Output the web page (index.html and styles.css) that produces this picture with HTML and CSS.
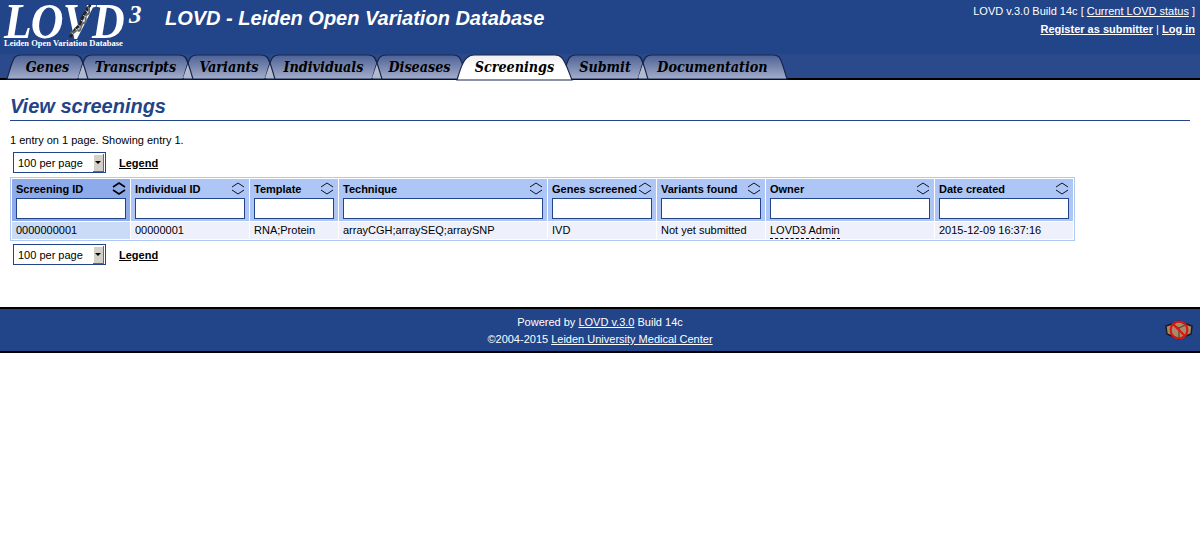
FILE: index.html
```html
<!DOCTYPE html>
<html lang="en">
<head>
<meta charset="utf-8">
<title>LOVD - Leiden Open Variation Database</title>
<link rel="stylesheet" href="styles.css">
</head>
<body>
<header class="top">
  <div class="logo">
    <div class="logo-row"><span class="logo-word">LOVD</span><span class="logo-three">3</span></div>
    <div class="logo-sub">Leiden Open Variation Database</div>
    <svg class="logo-dna" width="24" height="34" viewBox="0 0 30 36" preserveAspectRatio="none">
      <path d="M2 35C8 31 6 28 11 25S16 20 17 16 22 10 23 7 27 3 28 1" fill="none" stroke="#222" stroke-width="3"/>
      <path d="M3 30C8 33 9 26 13 28S15 20 20 20 19 12 24 11 25 5 26 3" fill="none" stroke="#666" stroke-width="2.4"/>
      <path d="M5 31l3 2M9 26l3 2M13 22l3 3M16 17l4 2M19 12l4 2M22 7l3 2" stroke="#ddd" stroke-width="1"/>
    </svg>
  </div>
  <div class="site-title">LOVD - Leiden Open Variation Database</div>
  <div class="top-right">
    <div>LOVD v.3.0 Build 14c [ <a href="#">Current LOVD status</a> ]</div>
    <div class="top-links"><a href="#"><b>Register as submitter</b></a> | <a href="#"><b>Log in</b></a></div>
  </div>
</header>
<nav class="tabs">
  <a class="tab" href="#"><svg width="81" height="24" viewBox="0 0 81 24"><defs><linearGradient id="tabfill" x1="0" y1="0" x2="0" y2="1"><stop offset="0" stop-color="#4b6094"/><stop offset="1" stop-color="#a5aecb"/></linearGradient><linearGradient id="tabactive" x1="0" y1="0" x2="0" y2="1"><stop offset="0" stop-color="#eeeeee"/><stop offset=".5" stop-color="#fff"/><stop offset="1" stop-color="#fff"/></linearGradient></defs><path class="tab-shape" d="M0 25C3 16 5 6 8 3Q10 1 14 1H67Q71 1 73 3C76 6 78 16 81 25Z"/></svg><span>Genes</span></a>
  <a class="tab" href="#"><svg width="115" height="24" viewBox="0 0 115 24"><path class="tab-shape" d="M0 25C3 16 5 6 8 3Q10 1 14 1H101Q105 1 107 3C110 6 112 16 115 25Z"/><path class="tab-joint" d="M5 10L10 24H0Z"/><path class="tab-edge" d="M2 3C5 6 7 16 10 25"/></svg><span>Transcripts</span></a>
  <a class="tab" href="#"><svg width="92" height="24" viewBox="0 0 92 24"><path class="tab-shape" d="M0 25C3 16 5 6 8 3Q10 1 14 1H78Q82 1 84 3C87 6 89 16 92 25Z"/><path class="tab-joint" d="M5 10L10 24H0Z"/><path class="tab-edge" d="M2 3C5 6 7 16 10 25"/></svg><span>Variants</span></a>
  <a class="tab" href="#"><svg width="117" height="24" viewBox="0 0 117 24"><path class="tab-shape" d="M0 25C3 16 5 6 8 3Q10 1 14 1H103Q107 1 109 3C112 6 114 16 117 25Z"/><path class="tab-joint" d="M5 10L10 24H0Z"/><path class="tab-edge" d="M2 3C5 6 7 16 10 25"/></svg><span>Individuals</span></a>
  <a class="tab" href="#"><svg width="95" height="24" viewBox="0 0 95 24"><path class="tab-shape" d="M0 25C3 16 5 6 8 3Q10 1 14 1H81Q85 1 87 3C90 6 92 16 95 25Z"/><path class="tab-joint" d="M5 10L10 24H0Z"/><path class="tab-edge" d="M2 3C5 6 7 16 10 25"/></svg><span>Diseases</span></a>
  <a class="tab tab-current" href="#"><svg width="115" height="26" viewBox="0 0 115 26"><path class="tab-shape" d="M0 26C3 16 6 6 11 3Q13 1 17 1H98Q102 1 104 3C108 6 111 16 115 26Z"/></svg><span>Screenings</span></a>
  <a class="tab" href="#"><svg width="86" height="24" viewBox="0 0 86 24"><path class="tab-shape" d="M0 25C3 16 5 6 8 3Q10 1 14 1H72Q76 1 78 3C81 6 83 16 86 25Z"/></svg><span>Submit</span></a>
  <a class="tab" href="#"><svg width="149" height="24" viewBox="0 0 149 24"><path class="tab-shape" d="M0 25C3 16 5 6 8 3Q10 1 14 1H135Q139 1 141 3C144 6 146 16 149 25Z"/><path class="tab-joint" d="M5 10L10 24H0Z"/><path class="tab-edge" d="M2 3C5 6 7 16 10 25"/></svg><span>Documentation</span></a>
</nav>
<main class="content">
  <h1 class="page-title">View screenings</h1>
  <p class="entries">1 entry on 1 page. Showing entry 1.</p>
  <div class="pager">
    <div class="select-box"><span>100 per page</span><span class="select-arrow"></span></div>
    <a class="legend" href="#">Legend</a>
  </div>
  <table class="data">
    <thead>
      <tr>
        <th class="sorted"><div class="th-row">Screening ID<svg class="sort" width="14" height="13" viewBox="0 0 14 13"><path class="sort-on" d="M1 5L7 1L13 5M1 8L7 12L13 8"/></svg></div><input class="f-110" type="text"></th>
        <th><div class="th-row">Individual ID<svg class="sort" width="14" height="13" viewBox="0 0 14 13"><path d="M1 5L7 1L13 5M1 8L7 12L13 8"/></svg></div><input class="f-110" type="text"></th>
        <th><div class="th-row">Template<svg class="sort" width="14" height="13" viewBox="0 0 14 13"><path d="M1 5L7 1L13 5M1 8L7 12L13 8"/></svg></div><input class="f-80" type="text"></th>
        <th><div class="th-row">Technique<svg class="sort" width="14" height="13" viewBox="0 0 14 13"><path d="M1 5L7 1L13 5M1 8L7 12L13 8"/></svg></div><input class="f-200" type="text"></th>
        <th><div class="th-row">Genes screened<svg class="sort" width="14" height="13" viewBox="0 0 14 13"><path d="M1 5L7 1L13 5M1 8L7 12L13 8"/></svg></div><input class="f-100" type="text"></th>
        <th><div class="th-row">Variants found<svg class="sort" width="14" height="13" viewBox="0 0 14 13"><path d="M1 5L7 1L13 5M1 8L7 12L13 8"/></svg></div><input class="f-100" type="text"></th>
        <th><div class="th-row">Owner<svg class="sort" width="14" height="13" viewBox="0 0 14 13"><path d="M1 5L7 1L13 5M1 8L7 12L13 8"/></svg></div><input class="f-160" type="text"></th>
        <th><div class="th-row">Date created<svg class="sort" width="14" height="13" viewBox="0 0 14 13"><path d="M1 5L7 1L13 5M1 8L7 12L13 8"/></svg></div><input class="f-130" type="text"></th>
      </tr>
    </thead>
    <tbody>
      <tr>
        <td class="sorted">0000000001</td>
        <td>00000001</td>
        <td>RNA;Protein</td>
        <td>arrayCGH;arraySEQ;arraySNP</td>
        <td>IVD</td>
        <td>Not yet submitted</td>
        <td class="owner-cell"><span class="owner">LOVD3 Admin</span></td>
        <td>2015-12-09 16:37:16</td>
      </tr>
    </tbody>
  </table>
  <div class="pager pager-bottom">
    <div class="select-box"><span>100 per page</span><span class="select-arrow"></span></div>
    <a class="legend" href="#">Legend</a>
  </div>
</main>
<footer class="foot">
  <div class="foot-text">
    <div>Powered by <a href="#">LOVD v.3.0</a> Build 14c</div>
    <div>©2004-2015 <a href="#">Leiden University Medical Center</a></div>
  </div>
  <svg class="foot-icon" width="28" height="22" viewBox="0 0 28 22">
    <path d="M1 7L7 5L14 2L21 5L27 7L26 15L21 17L14 20L7 17L2 15Z" fill="#a88a68" stroke="#1a1a1a" stroke-width="1.4"/>
    <path d="M8 6L14 9L20 6M14 9V19" fill="none" stroke="#5a4632" stroke-width="1.2"/>
    <circle cx="14" cy="11" r="8.4" fill="none" stroke="#d81818" stroke-width="2.2"/>
    <path d="M8 5L20 17" stroke="#d81818" stroke-width="2.2"/>
  </svg>
</footer>
</body>
</html>
```
FILE: styles.css
```css
* { box-sizing: border-box; }
body {
  margin: 0;
  background: #fff;
  color: #000;
  font: 11px/14px "Liberation Sans", Arial, sans-serif;
}
a { color: inherit; }

.top {
  display: flex;
  height: 54px;
  background: #224488;
  color: #fff;
}
.logo {
  position: relative;
  width: 165px;
  padding: 0 0 0 4px;
  flex: none;
}
.logo-row {
  display: flex;
  height: 38px;
  align-items: flex-start;
}
.logo-word {
  display: inline-block;
  width: 125px;
  font: italic bold 51px/43px "Liberation Serif", serif;
  letter-spacing: -1px;
  transform: scaleX(0.89);
  transform-origin: left top;
  white-space: nowrap;
}
.logo-three {
  font: italic bold 25px/29px "Liberation Serif", serif;
}
.logo-sub {
  font: bold 8.5px/10px "Liberation Serif", serif;
  white-space: nowrap;
}
.logo-dna {
  position: absolute;
  left: 68px;
  top: 4px;
}
.site-title {
  font: italic bold 20px/36px "Liberation Sans", Arial, sans-serif;
  white-space: nowrap;
}
.top-right {
  margin-left: auto;
  padding: 3px 5px 0 0;
  text-align: right;
  line-height: 17px;
}
.top-links { margin-top: 1px; }

.tabs {
  display: flex;
  height: 26px;
  padding-left: 7px;
  background: #2a4a8c;
  border-bottom: 2px solid #000;
}
.tab {
  display: grid;
  margin-left: -10px;
  text-decoration: none;
  color: #000;
}
.tab:first-child { margin-left: 0; }
.tab svg {
  grid-area: 1 / 1;
  display: block;
  overflow: visible;
}
.tab span {
  grid-area: 1 / 1;
  position: relative;
  justify-self: center;
  padding-top: 1px;
  font: italic bold 14.2px/24px "DejaVu Serif Condensed", "DejaVu Serif", serif;
  white-space: nowrap;
}
.tab-shape {
  fill: url(#tabfill);
  stroke: #16264c;
  stroke-width: 1.2;
}
.tab-joint { fill: #b4bace; }
.tab-edge {
  fill: none;
  stroke: #16264c;
  stroke-width: 1.2;
}
.tab-current { position: relative; z-index: 1; height: 26px; }
.tab-current .tab-shape { fill: url(#tabactive); }

.content { padding: 14px 10px 0; }
.page-title {
  margin: 0;
  padding-bottom: 2px;
  height: 27px;
  font: italic bold 20px/24px "Liberation Sans", Arial, sans-serif;
  color: #224488;
  border-bottom: 1px solid #224488;
}
.entries { margin: 12px 0 0; }
.pager {
  display: flex;
  align-items: center;
  gap: 13px;
  margin: 5px 0 4px 3px;
}
.pager-bottom { margin-top: 3px; }
.select-box {
  display: flex;
  justify-content: space-between;
  align-items: center;
  width: 93px;
  height: 21px;
  padding: 0 1px 0 4px;
  border: 1px solid #224488;
  background: #fff;
}
.select-arrow {
  position: relative;
  width: 11px;
  height: 18px;
  background: #d4d0c8;
  border-right: 1px solid #666;
  border-bottom: 1px solid #666;
  box-shadow: inset 1px 1px 0 #fff;
}
.select-arrow::after {
  content: "";
  position: absolute;
  left: 2px;
  top: 7px;
  border: 3px solid transparent;
  border-top: 3px solid #000;
  border-bottom: 0;
}
.legend { font-weight: bold; }

.data {
  border-collapse: separate;
  border-spacing: 1px;
  background: #fff;
  border: 1px solid #b0c8f4;
}
.data th, .data td {
  padding: 0 4px;
  text-align: left;
  vertical-align: top;
}
.data th {
  background: #adc6f5;
  padding-bottom: 2px;
}
.data th.sorted { background: #8dabeb; }
.data td {
  background: #eef1fc;
  height: 16px;
  line-height: 16px;
  white-space: nowrap;
}
.data td.sorted { background: #c9dbf7; }
.th-row {
  display: flex;
  justify-content: space-between;
  align-items: center;
  height: 19px;
  white-space: nowrap;
}
.sort { flex: none; }
.sort path {
  fill: none;
  stroke: #112;
  stroke-width: 1;
}
.sort path.sort-on { stroke: #000; stroke-width: 1.6; }
.data input {
  display: block;
  height: 21px;
  padding: 0;
  border: 1px solid #224488;
  background: #fff;
}
.f-80 { width: 80px; }
.f-100 { width: 100px; }
.f-110 { width: 110px; }
.f-130 { width: 130px; }
.f-160 { width: 160px; }
.f-200 { width: 200px; }
.owner {
  display: inline-block;
  height: 17px;
  border-bottom: 1px dashed #000;
}

.foot {
  display: flex;
  align-items: center;
  margin-top: 42px;
  height: 46px;
  padding: 0 7px 0 0;
  background: #224488;
  color: #fff;
  border-top: 2px solid #000;
  border-bottom: 2px solid #000;
}
.foot-text {
  flex: 1;
  padding: 2px 0 0 35px;
  text-align: center;
  line-height: 17px;
}
.foot-icon { flex: none; }
```
